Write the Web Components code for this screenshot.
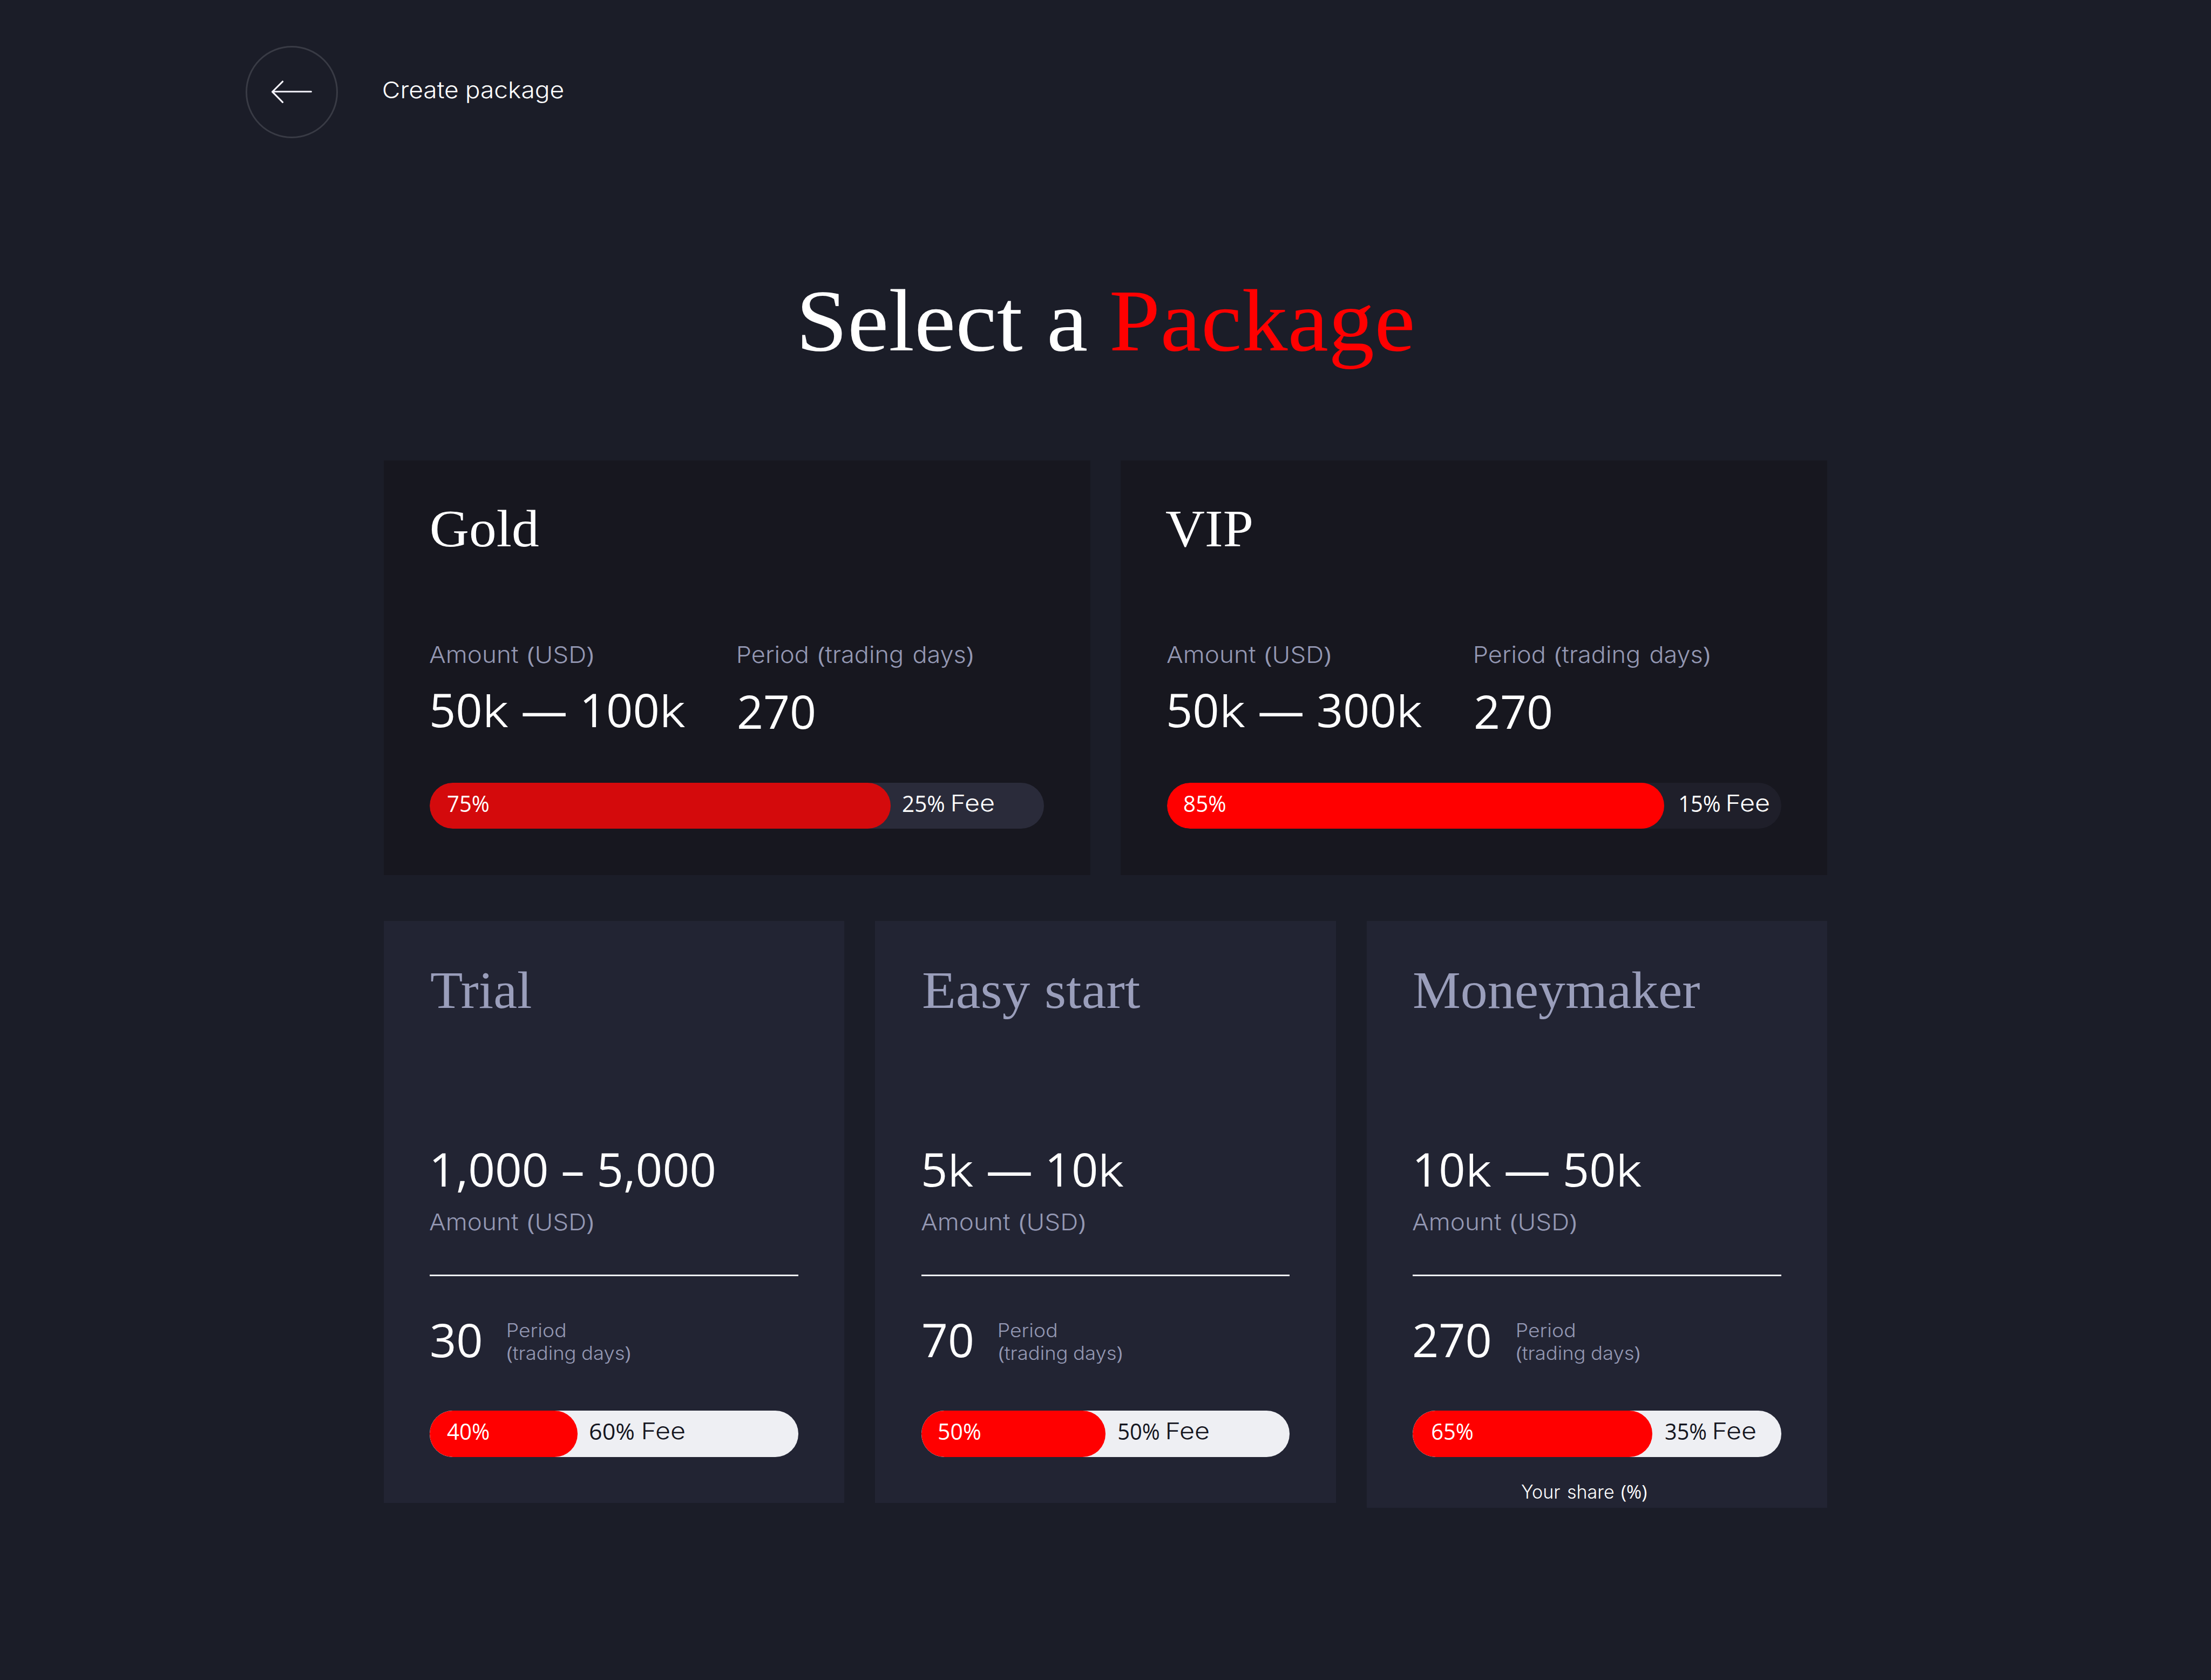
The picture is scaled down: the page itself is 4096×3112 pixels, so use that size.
<!DOCTYPE html>
<html lang="en">
<head>
<meta charset="utf-8">
<title>Select a Package</title>
<style>
  /* 1rem = 10 layout pixels on a 1440 wide page */
  html {
    font-size: calc(100vw / 144);
    background: #1b1d28;
  }
  body {
    margin: 0;
    color: #fff;
    font-family: Inter, "Open Sans", sans-serif;
  }
</style>
</head>
<body>
<package-page></package-page>

<script>
(function () {
    const ctx = document.createElement("canvas").getContext("2d");

    // Single line of text, stretched so that its ink is exactly `width` wide.
    // Digits and punctuation use the secondary face.
    class FitText extends HTMLElement {
        constructor() {
            super();
            this.attachShadow({ mode: "open" });
        }

        connectedCallback() {
            const x = this.getAttribute("x") || 0;
            const width = Number(this.getAttribute("width"));
            this.shadowRoot.innerHTML = `
              <style>
                :host {
                    display: block;
                    flex: none;
                    width: ${width / 10}rem;
                    margin-left: ${x / 10}rem;
                    font-weight: 300;
                    font-size: 1.5rem;
                    line-height: 2rem;
                }
                .line { display: block; width: max-content; white-space: pre; transform-origin: 0 50%; }
                .line span { line-height: 0; }
                .num { font-family: "Open Sans", "Noto Sans", sans-serif; font-weight: 400; }
                :host([kind=label]) { color: #9498b3; }
                :host([kind=small]) { color: #9498b3; font-size: 1.22rem; line-height: 1.48rem; }
                :host([kind=note]) { font-size: 1.22rem; line-height: 1.5rem; }
                :host([kind=label]) .space, :host([kind=note]) .space { letter-spacing: .1em; }
                :host([kind=fee]) { line-height: 2.7rem; }
                :host([kind=percent]) {
                    font-family: "Open Sans", "Noto Sans", sans-serif;
                    line-height: 2.64rem;
                }
                :host([kind=value]) {
                    font-family: "Open Sans", "Noto Sans", sans-serif;
                    font-weight: 400;
                    font-size: 3rem;
                    line-height: 4rem;
                }
                :host([kind=value]) .word {
                    display: inline-block;
                    margin-right: .15rem;
                    font-family: Inter, sans-serif;
                    font-size: 2.93rem;
                    font-weight: 300;
                    transform: scaleX(1.1);
                    transform-origin: 0 50%;
                }
                :host([kind=title]) {
                    font-family: "Liberation Serif", serif;
                    font-weight: 400;
                    font-size: 3.44rem;
                    line-height: 2.88rem;
                }
                :host([kind=heading]) {
                    font-family: "Liberation Serif", serif;
                    font-weight: 400;
                    font-size: 5.76rem;
                    line-height: 6rem;
                }
              </style>
              <div class="line"></div>
            `;
            const line = this.shadowRoot.querySelector(".line");
            for (const run of this.getAttribute("text").match(/[0-9()%,–—]+|[A-Za-z]+|\s+/g)) {
                const span = document.createElement("span");
                span.className = /[A-Za-z]/.test(run) ? "word" : /\s/.test(run) ? "num space" : "num";
                span.textContent = run;
                line.appendChild(span);
            }
            this.fit(line, width);
        }

        // side bearings of a glyph in the face its run is set in
        bearings(span, ch) {
            const s = getComputedStyle(span);
            ctx.font = `${s.fontWeight} ${s.fontSize} ${s.fontFamily}`;
            const m = ctx.measureText(ch);
            return { left: -m.actualBoundingBoxLeft, right: m.width - m.actualBoundingBoxRight };
        }

        fit(line, width) {
            const unit = parseFloat(getComputedStyle(document.documentElement).fontSize) / 10;
            const first = line.firstElementChild;
            const last = line.lastElementChild;
            const left = this.bearings(first, first.textContent[0]).left;
            const right = this.bearings(last, last.textContent.slice(-1)).right;
            const scale = width * unit / (line.getBoundingClientRect().width - left - right);
            line.style.transform = `translateX(${-left * scale}px) scaleX(${scale})`;
        }
    }
    customElements.define("fit-text", FitText);

    class BackButton extends HTMLElement {
        constructor() {
            super();
            this.attachShadow({ mode: "open" }).innerHTML = `
              <style>
                :host {
                    display: flex;
                    box-sizing: border-box;
                    width: 6rem;
                    height: 6rem;
                    border: 3px solid #393b45;
                    border-radius: 50%;
                }
                svg { width: 100%; height: 100%; }
              </style>
              <svg viewBox="1 1 58 58" fill="none" stroke="#f3f2fa" stroke-width="1.1" stroke-linecap="round" stroke-linejoin="round">
                <path d="M42.7 29.8H17.4M24.1 23.2L17.4 29.9L24.1 36.7"/>
              </svg>
            `;
        }
    }
    customElements.define("back-button", BackButton);

    // Profit share / fee bar
    class ShareBar extends HTMLElement {
        constructor() {
            super();
            this.attachShadow({ mode: "open" });
        }

        connectedCallback() {
            const d = JSON.parse(this.getAttribute("data"));
            this.shadowRoot.innerHTML = `
              <style>
                :host {
                    display: flex;
                    height: 3rem;
                    border-radius: 1.5rem;
                    background: ${d.track};
                    color: ${d.ink};
                    overflow: hidden;
                }
                .fill {
                    flex: none;
                    width: ${d.fill}%;
                    height: 3rem;
                    border-radius: 1.5rem;
                    background: ${d.color};
                    color: #fff;
                }
              </style>
              <div class="fill"><fit-text kind="percent" x="${d.share[1]}" width="${d.share[2]}" text="${d.share[0]}"></fit-text></div>
              <fit-text kind="percent" x="${d.fee[1]}" width="${d.fee[2]}" text="${d.fee[0]}"></fit-text>
              <fit-text kind="fee" x="${d.gap}" width="26.8" text="Fee"></fit-text>
            `;
        }
    }
    customElements.define("share-bar", ShareBar);

    const text = (kind, [str, x, width]) =>
        `<fit-text kind="${kind}" x="${x}" width="${width}" text="${str}"></fit-text>`;

    class PackageCard extends HTMLElement {
        constructor() {
            super();
            this.attachShadow({ mode: "open" });
        }

        set data(d) {
            this._data = d;
        }

        connectedCallback() {
            const d = this._data;
            const bar = `<share-bar data='${JSON.stringify(d.bar)}'></share-bar>`;
            this.shadowRoot.innerHTML = `
              <style>
                :host {
                    display: block;
                    box-sizing: border-box;
                    padding: 3rem;
                    background: ${d.featured ? "#17171f" : "#222433"};
                }
                .title { color: ${d.featured ? "#fff" : "#9a9ebb"}; }
                .facts { display: grid; grid-template-columns: 20rem 20rem; margin: 5.78rem 0 2.64rem; }
                .facts .amount { padding-top: .58rem; }
                .facts .period { padding-top: .68rem; }
                .basic .title { padding-top: .1rem; margin-bottom: 8.2rem; }
                .basic .caption { margin-top: .45rem; }
                hr { height: .1rem; margin: 2.4rem 0 2.16rem; border: 0; background: #eeeff3; }
                .term { display: flex; margin-bottom: 2.61rem; }
                .term .caption { margin-top: .61rem; }
                .share { margin: 1.52rem 0 -2.72rem; }
              </style>
              ${d.featured ? `
                <div class="title">${text("title", d.title)}</div>
                <div class="facts">
                  <div>${text("label", ["Amount (USD)", 0, 106.2])}<div class="amount">${text("value", d.amount)}</div></div>
                  <div>${text("label", ["Period (trading days)", .9, 152.4])}<div class="period">${text("value", d.period)}</div></div>
                </div>
                ${bar}
              ` : `
                <div class="basic">
                  <div class="title">${text("title", d.title)}</div>
                  ${text("value", d.amount)}
                  <div class="caption">${text("label", ["Amount (USD)", 0, 106.2])}</div>
                  <hr>
                  <div class="term">
                    ${text("value", d.period)}
                    <div class="caption">
                      ${text("small", ["Period", 17.7, 37.1])}
                      ${text("small", ["(trading days)", 17.4, 79.8])}
                    </div>
                  </div>
                  ${bar}
                  ${d.note ? `<div class="share">${text("note", d.note)}</div>` : ""}
                </div>
              `}
            `;
        }
    }
    customElements.define("package-card", PackageCard);

    // texts are [string, ink offset, ink width]
    const light = { track: "#eeeff3", ink: "#15161f", color: "#ff0000" };
    const featured = [
        {
            featured: true, title: ["Gold", 1.1, 69.5], amount: ["50k — 100k", 1.2, 165.1], period: ["270", 1.2, 49],
            bar: { track: "#2a2b3a", ink: "#fff", color: "#d40a0c", fill: 75, share: ["75%", 11.4, 26.9], fee: ["25%", 8.3, 26.9], gap: 5.2 }
        },
        {
            featured: true, title: ["VIP", -.5, 55.7], amount: ["50k — 300k", 1.2, 165.1], period: ["270", 1.2, 49],
            bar: { track: "#1f1f2a", ink: "#fff", color: "#ff0000", fill: 81, share: ["85%", 11.4, 26.9], fee: ["15%", 10.2, 26.2], gap: 5.1 }
        }
    ];
    const basic = [
        {
            title: ["Trial", .5, 65.5], amount: ["1,000 – 5,000", 2.1, 183.2], period: ["30", .9, 32.3],
            bar: { ...light, fill: 40, share: ["40%", 11.1, 27.5], fee: ["60%", 8.4, 28.7], gap: 6.1 }
        },
        {
            title: ["Easy start", 1.1, 141.4], amount: ["5k — 10k", 1.6, 130.5], period: ["70", 1.2, 32],
            bar: { ...light, fill: 50, share: ["50%", 11.3, 27.3], fee: ["50%", 8.6, 26.6], gap: 5.1 }
        },
        {
            title: ["Moneymaker", .8, 186.3], amount: ["10k — 50k", 2.3, 147.1], period: ["270", 1.2, 49.2],
            bar: { ...light, fill: 65, share: ["65%", 12.6, 26.6], fee: ["35%", 8.6, 26.7], gap: 5.1 },
            note: ["Your share (%)", 70.8, 81.6]
        }
    ];

    class PackagePage extends HTMLElement {
        constructor() {
            super();
            this.attachShadow({ mode: "open" });
        }

        connectedCallback() {
            this.shadowRoot.innerHTML = `
              <style>
                :host {
                    display: block;
                    box-sizing: border-box;
                    height: 109.4rem;
                    padding: 3rem 25rem 0;
                    overflow: hidden;
                    background: #1b1d28;
                }
                header { display: flex; align-items: center; margin-left: -9rem; }
                header fit-text { padding-bottom: .2rem; }
                h1 { display: flex; justify-content: center; margin: 8.89rem 0 6.11rem .19rem; font-size: inherit; }
                h1 .accent { color: #ff0000; }
                .row { display: grid; align-items: start; column-gap: 2rem; }
                .featured { grid-template-columns: repeat(2, 1fr); }
                .basic { grid-template-columns: repeat(3, 1fr); margin-top: 3rem; }
              </style>
              <header>
                <back-button></back-button>
                <fit-text x="29.7" width="117.2" text="Create package"></fit-text>
              </header>
              <h1>
                <fit-text kind="heading" width="185.8" text="Select a"></fit-text>
                <fit-text class="accent" kind="heading" x="16.2" width="196.1" text="Package"></fit-text>
              </h1>
              <div class="row featured"></div>
              <div class="row basic"></div>
            `;
            this.fill(".featured", featured);
            this.fill(".basic", basic);
        }

        fill(selector, list) {
            const row = this.shadowRoot.querySelector(selector);
            for (const item of list) {
                const card = document.createElement("package-card");
                card.data = item;
                row.appendChild(card);
            }
        }
    }
    customElements.define("package-page", PackagePage);
})();
</script>
</body>
</html>
